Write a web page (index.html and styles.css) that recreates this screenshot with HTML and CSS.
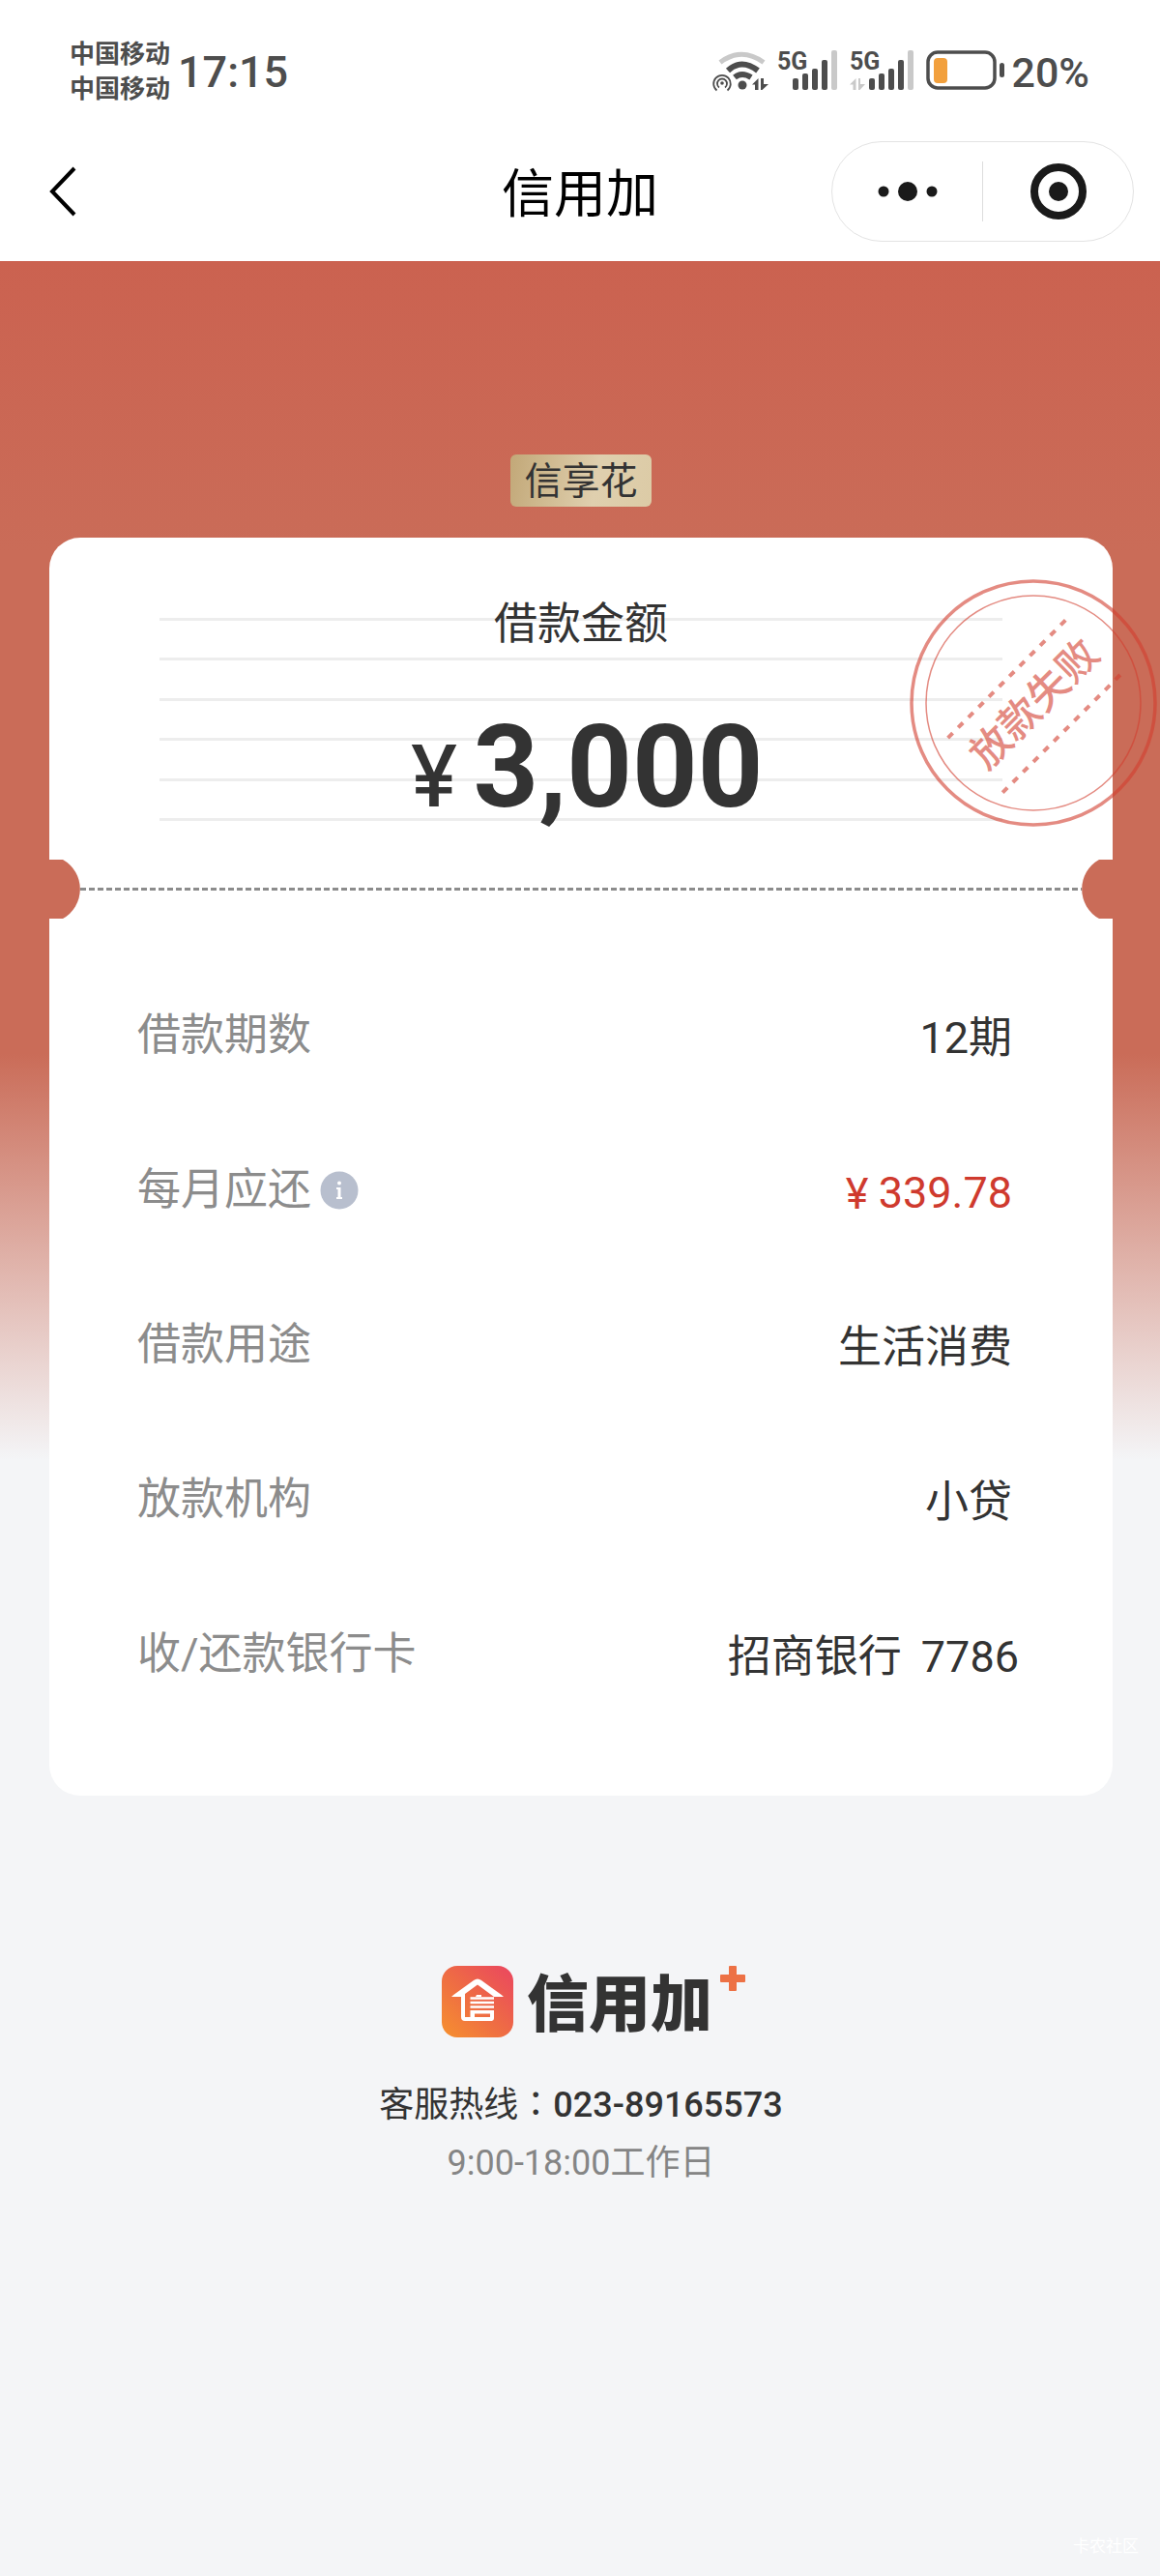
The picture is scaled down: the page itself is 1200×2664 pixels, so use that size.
FILE: index.html
```html
<!DOCTYPE html>
<html lang="zh-CN">
<head>
<meta charset="utf-8">
<meta name="viewport" content="width=device-width, initial-scale=1">
<title>信用加</title>
<link rel="stylesheet" href="styles.css">
</head>
<body>
<header class="top">
  <div class="status">
    <div class="carriers"><span>中国移动</span><span>中国移动</span></div>
    <time class="clock">17:15</time>
    <div class="indicators">
      <svg class="wifi" width="60" height="44" viewBox="0 0 60 44" fill="none" stroke="#4d4d4d" aria-hidden="true">
        <path d="M9 13.500Q31-3 54 13.500" stroke="#c9c9c9" stroke-width="5"/>
        <path d="M17 22Q31 9 48 22" stroke-width="6"/>
        <path d="M24 29Q31.500 23 41 29" stroke-width="6"/>
        <circle cx="32" cy="37" r="4.500" fill="#4d4d4d" stroke="none"/>
        <path d="M5.500 42.500A8.800 8.800 0 1 1 16.500 42.500M8 39.500A5 5 0 1 1 14 39.500" stroke-width="1.800"/>
        <circle cx="11" cy="35" r="1.800" fill="#4d4d4d" stroke="none"/>
        <path d="M42 36.500L48.500 30V42H45V36.500ZM51 30H54V36H59L52.500 42H51Z" fill="#4d4d4d" stroke="none"/>
      </svg>
      <svg class="signal" width="66" height="52" viewBox="0 -4 66 52" fill="#4d4d4d" aria-hidden="true">
        <text class="net" x="0" y="21">5G</text>
        <rect x="16" y="30" width="6" height="12" rx="2"/><rect x="26" y="25" width="6" height="17" rx="2"/>
        <rect x="36" y="20" width="6" height="22" rx="2"/><rect x="46" y="11" width="6" height="31" rx="2"/>
        <rect x="56" y="1" width="6" height="41" rx="2" fill="#c9c9c9"/>
      </svg>
      <svg class="signal" width="70" height="52" viewBox="0 -4 70 52" fill="#4d4d4d" aria-hidden="true">
        <text class="net" x="0" y="21">5G</text>
        <path d="M0 36.500L6.500 30V42H3.500V36.500ZM9 30H11V36H16L10.500 42H9Z" fill="#c9c9c9"/>
        <rect x="20" y="30" width="6" height="12" rx="2"/><rect x="30" y="25" width="6" height="17" rx="2"/>
        <rect x="40" y="20" width="6" height="22" rx="2"/><rect x="50" y="11" width="6" height="31" rx="2"/>
        <rect x="60" y="1" width="6" height="41" rx="2" fill="#c9c9c9"/>
      </svg>
      <svg class="battery" width="84" height="44" viewBox="0 0 84 44" aria-hidden="true">
        <rect x="2" y="3" width="69" height="37" rx="10" fill="none" stroke="#4d4d4d" stroke-width="3.500"/>
        <rect x="8" y="9" width="14" height="26" rx="4" fill="#f2a03d"/>
        <rect x="76" y="14" width="5" height="15" rx="2.500" fill="#4d4d4d"/>
      </svg>
      <span class="percent">20%</span>
    </div>
  </div>
  <nav class="nav">
    <button class="back" type="button" aria-label="返回">
      <svg width="28" height="52" viewBox="0 0 28 52" fill="none" stroke="#000" stroke-width="4" aria-hidden="true"><path d="M26 2L3 26L26 50"/></svg>
    </button>
    <h1 class="title">信用加</h1>
    <div class="capsule">
      <button type="button" aria-label="更多">
        <svg width="62" height="24" viewBox="0 0 62 24" fill="#1a1a1a" aria-hidden="true"><circle cx="6" cy="12" r="5.500"/><circle cx="31" cy="12" r="10"/><circle cx="56" cy="12" r="5.500"/></svg>
      </button>
      <span class="capsule-rule"></span>
      <button type="button" aria-label="关闭">
        <svg width="58" height="58" viewBox="0 0 58 58" aria-hidden="true"><circle cx="29" cy="29" r="25" fill="none" stroke="#1a1a1a" stroke-width="8"/><circle cx="29" cy="29" r="10" fill="#1a1a1a"/></svg>
      </button>
    </div>
  </nav>
</header>

<main class="page">
  <span class="badge">信享花</span>

  <section class="card">
    <div class="amount">
      <div class="ruled" aria-hidden="true"><i></i><i></i><i></i><i></i><i></i><i></i></div>
      <div class="amount-text">
        <h2>借款金额</h2>
        <p class="sum"><span class="yen">¥</span>3,000</p>
      </div>
    </div>

    <div class="tear" aria-hidden="true">
      <svg width="32" height="61" viewBox="0 0 32 61" fill="#ca6c58"><path d="M0 0H14A35 35 0 0 1 14 61H0Z"/></svg>
      <span class="perforation"></span>
      <svg width="32" height="61" viewBox="0 0 32 61" fill="#ca6c58"><path d="M32 0H18A35 35 0 0 0 18 61H32Z"/></svg>
    </div>

    <dl class="details">
      <div class="row"><dt>借款期数</dt><dd>12期</dd></div>
      <div class="row">
        <dt>每月应还
          <button class="info" type="button" aria-label="说明">
            <svg width="40" height="40" viewBox="0 0 40 40" aria-hidden="true"><circle cx="20" cy="20" r="19.500" fill="#b8bfce"/><g fill="#fff"><circle cx="20" cy="12.500" r="2"/><path d="M17 17H21.500V27H23V29H17V27H18.500V19H17Z"/></g></svg>
          </button>
        </dt>
        <dd class="due"><span class="due-yen">¥</span>339.78</dd>
      </div>
      <div class="row"><dt>借款用途</dt><dd>生活消费</dd></div>
      <div class="row"><dt>放款机构</dt><dd>小贷</dd></div>
      <div class="row row-bank"><dt>收/还款银行卡</dt><dd><span>招商银行</span> <span>7786</span></dd></div>
    </dl>

    <svg class="stamp" width="256" height="256" viewBox="-128 -128 256 256" role="img" aria-label="放款失败">
      <g transform="rotate(-45)" fill="none" stroke="#d33f30">
        <circle r="126" stroke-width="3.500"/>
        <circle r="111" stroke-width="1.500"/>
        <path d="M-88-37H89M-88 43H89" stroke-width="4" stroke-dasharray="7 8"/>
        <text x="0" y="16" text-anchor="middle" fill="#d33f30" stroke="none">放款失败</text>
      </g>
    </svg>
  </section>

  <footer class="footer">
    <div class="brand">
      <svg width="74" height="74" viewBox="0 0 74 74" aria-hidden="true">
        <defs><linearGradient id="logo" x1="0" y1="1" x2="1" y2="0"><stop offset="0" stop-color="#f6912e"/><stop offset=".5" stop-color="#ee6a45"/><stop offset="1" stop-color="#ea4660"/></linearGradient></defs>
        <rect width="74" height="74" rx="16" fill="url(#logo)"/>
        <path d="M10 32Q12 30 15 28L33 15Q37 12 41 15L59 28Q62 30 64 32H54L37 19.500L24 29V53H50V49.500H34V55H29.500V46H54V54Q54 57 51 57H24Q20 57 20 53V32Z" fill="#fff"/>
        <path d="M29.500 33.500H54M29.500 38H54M29.500 42.500H54" fill="none" stroke="#fff" stroke-width="2.500"/>
        <path d="M35 32L36 30H41V32Z" fill="#fff"/>
      </svg>
      <strong class="wordmark">信用加</strong>
      <svg width="26" height="26" viewBox="0 0 26 26" fill="#ed7145" aria-hidden="true"><rect x="9" width="8" height="26" rx="1"/><rect y="9" width="26" height="8" rx="1"/></svg>
    </div>
    <p class="hotline">客服热线<span class="colon" lang="zh-TW">：</span><a href="tel:02389165573">023-89165573</a></p>
    <p class="hours">9:00-18:00工作日</p>
  </footer>
  <span class="watermark">卡农社区</span>
</main>
</body>
</html>
```

FILE: styles.css
```css
* { box-sizing: border-box; }

body {
  margin: 0;
  min-height: 100vh;
  display: flex;
  flex-direction: column;
  background: #f4f5f7;
  color: #333;
  font-family: Roboto, "Noto Sans CJK SC", sans-serif;
}

h1, h2, p, dl, dd { margin: 0; font-weight: 400; }

button {
  display: flex;
  align-items: center;
  justify-content: center;
  padding: 0;
  border: 0;
  background: none;
}

svg { display: block; flex: none; }

/* Phone status bar and navigation */
.top { background: #fff; }

.status {
  display: flex;
  align-items: center;
  height: 146px;
  padding: 0 73px 0 72px;
  color: #4d4d4d;
}

.carriers {
  display: flex;
  flex-direction: column;
  padding-top: 2px;
  font-size: 26px;
  font-weight: 700;
  line-height: 36px;
}

.clock, .percent { font-weight: 500; line-height: 54px; }
.clock { margin-left: 8px; padding-top: 4px; font-size: 45px; }
.indicators { display: flex; align-items: center; margin-left: auto; }
.wifi { margin-right: 8px; }
.signal { margin-right: 9px; }
.battery { margin-right: 4px; }
.percent { padding-top: 4px; font-size: 43px; }
.net { font: 700 25px Roboto, sans-serif; }

.nav {
  display: grid;
  grid-template-columns: 1fr auto 1fr;
  align-items: start;
  padding: 0 27px 20px;
}

.back { justify-self: start; height: 104px; padding-left: 24px; }
.title { color: #000; font-size: 54px; line-height: 72px; padding-top: 20px; }

.capsule {
  justify-self: end;
  display: flex;
  align-items: center;
  width: 313px;
  height: 104px;
  border: 1px solid #e3e3e3;
  border-radius: 52px;
}
.capsule button { flex: 1; height: 100%; }
.capsule-rule { width: 1px; height: 62px; background: #ddd; }

/* Loan result */
.page {
  flex: 1;
  position: relative;
  padding: 200px 49px 0 51px;
  background: linear-gradient(#cb6250 0, #ca6c58 300px, #ca6c58 820px, #f4f5f7 1240px);
}

.badge {
  display: block;
  width: fit-content;
  margin: 0 auto 32px;
  padding: 2px 14px 0;
  border-radius: 6px;
  background: linear-gradient(100deg, #c2a878, #dfcfae 60%, #dccba6);
  font-size: 39px;
  line-height: 52px;
}

.card { position: relative; border-radius: 32px; background: #fff; }

.amount { display: grid; height: 333px; padding: 0 114px; }
.amount > * { grid-area: 1 / 1; }

.ruled {
  display: flex;
  flex-direction: column;
  justify-content: space-between;
  padding: 83px 0 40px;
}
.ruled i { height: 3px; background: #ededed; }

.amount-text { position: relative; padding-top: 58px; text-align: center; }
.amount-text h2 { font-size: 45px; line-height: 64px; }
.sum {
  display: flex;
  justify-content: center;
  align-items: baseline;
  padding: 46px 0 0 12px;
  font-size: 118px;
  font-weight: 700;
  line-height: 140px;
}
.yen { margin-right: 16px; font-family: Inter, sans-serif; font-size: 88px; font-weight: 500; }

.tear { display: flex; align-items: center; }
.perforation {
  flex: 1;
  height: 3px;
  background: repeating-linear-gradient(90deg, #8c8c8c 0 6px, transparent 6px 9px);
}

.details { padding: 41px 0 66px; font-size: 45px; line-height: 60px; }
.row {
  display: flex;
  align-items: center;
  justify-content: space-between;
  height: 160px;
  padding: 0 104px 0 91px;
}
.row-bank { padding-right: 97px; }
.row dt { display: flex; align-items: center; gap: 9px; color: #8c8c8c; }
.row dd { display: flex; gap: 20px; padding-top: 6px; }
.row .due { gap: 10px; color: #cf3a2e; }
.due-yen { font-family: Inter, sans-serif; font-size: 44px; }

.stamp { position: absolute; top: 43px; right: -46px; opacity: .6; }
.stamp text { font: 500 42px "Noto Sans CJK SC", sans-serif; }

/* Brand and service line */
.footer { padding-top: 176px; text-align: center; }
.brand { display: flex; align-items: flex-start; justify-content: center; margin-bottom: 36px; padding-left: 26px; }
.wordmark {
  margin: 0 8px 0 14px;
  font: 900 64px/68px "Noto Sans CJK SC", sans-serif;
}
.hotline, .hours { font-size: 36px; line-height: 60px; }
.hotline a { color: inherit; font-weight: 500; text-decoration: none; }
.colon { font-family: "Noto Sans CJK TC", sans-serif; }
.hours { color: #858585; }

.watermark {
  position: absolute;
  right: 22px;
  bottom: 18px;
  color: #fff;
  font-size: 17px;
  line-height: 26px;
}
```
